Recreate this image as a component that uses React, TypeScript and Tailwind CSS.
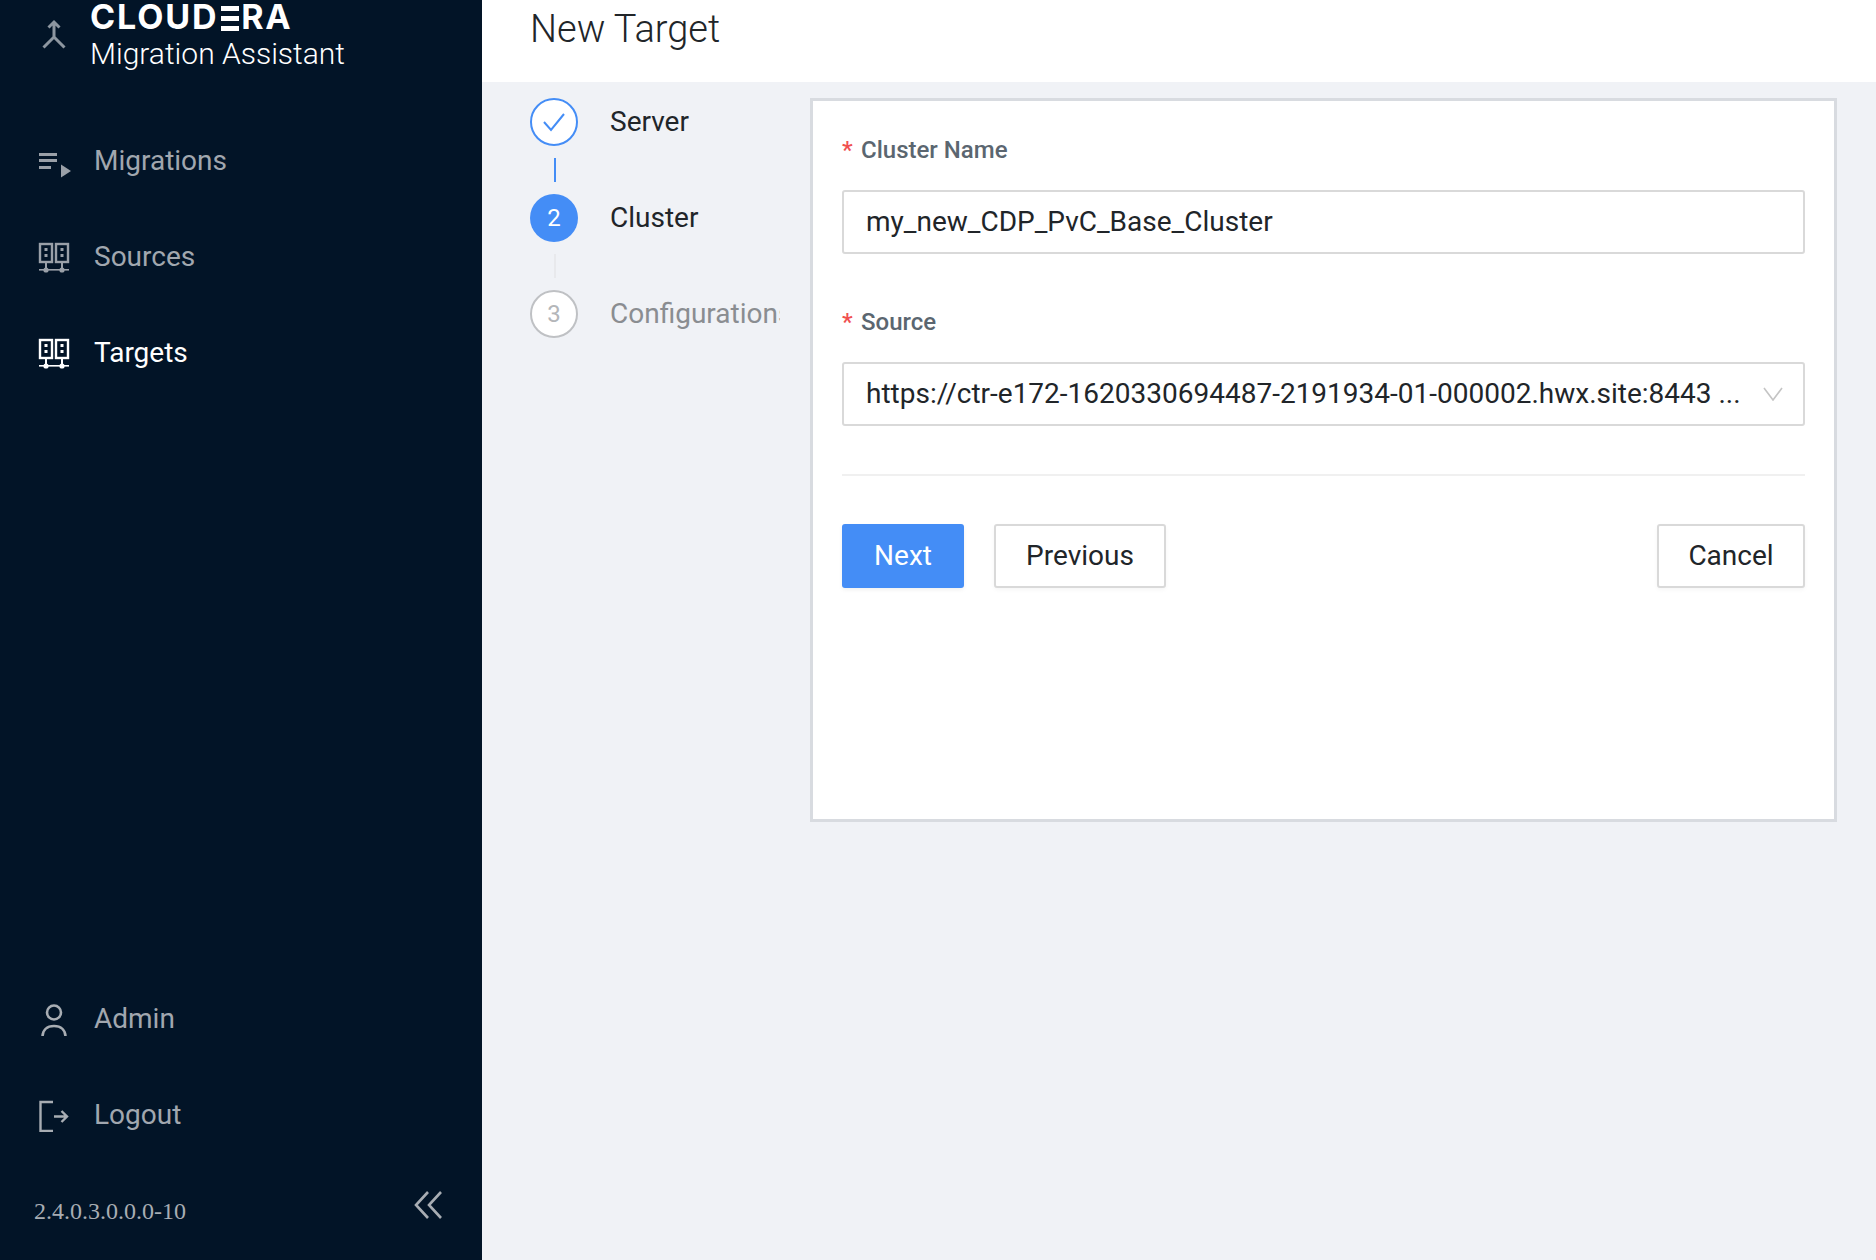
const font = { fontFamily: 'Roboto, sans-serif' }

const MigrationsIcon = () => (
    <svg width="34" height="34" viewBox="0 0 34 34" fill="#9aa0a8">
        <rect x="1" y="9" width="18" height="3" />
        <rect x="1" y="15" width="18" height="3" />
        <rect x="1" y="22" width="12" height="3" />
        <path d="M23 20.5L33 27L23 33.5Z" />
    </svg>
)

const ServersIcon = ({ color }: { color: string }) => (
    <svg width="34" height="34" viewBox="0 0 34 34" fill={color} stroke="none">
        <rect x="2" y="4" width="12" height="18" fill="none" stroke={color} strokeWidth="2.4" />
        <rect x="18" y="4" width="12" height="18" fill="none" stroke={color} strokeWidth="2.4" />
        <rect x="6.5" y="8" width="3" height="3" />
        <rect x="6.5" y="14" width="3" height="3" />
        <rect x="22.5" y="8" width="3" height="3" />
        <rect x="22.5" y="14" width="3" height="3" />
        <rect x="7" y="22" width="2" height="8" />
        <rect x="23" y="22" width="2" height="8" />
        <rect x="1" y="29" width="30" height="1.6" />
        <circle cx="8" cy="30" r="2.6" />
        <circle cx="24" cy="30" r="2.6" />
    </svg>
)

const UserIcon = () => (
    <svg width="34" height="34" viewBox="0 0 34 34" fill="none" stroke="#a8adb3" strokeWidth="2.6">
        <circle cx="16" cy="10.5" r="7" />
        <path d="M4.5 35C4.5 28 9 24 16 24C23 24 27.5 28 27.5 35" />
    </svg>
)

const LogoutIcon = () => (
    <svg width="34" height="34" viewBox="0 0 34 34" fill="none" stroke="#a8adb3" strokeWidth="2.4">
        <path d="M15 4H2.5V33H15" />
        <path d="M16 18.5H29M23.5 13L29 18.5L23.5 24" />
    </svg>
)

const NavItem = ({ icon, label, active }: { icon: React.ReactNode; label: string; active?: boolean }) => (
    <div className="flex h-[96px] items-center gap-[22px] pl-[38px]">
        {icon}
        <span className={`text-[28px] ${active ? 'text-white' : 'text-[#a1a7af]'}`} style={font}>
            {label}
        </span>
    </div>
)

const Sidebar = () => (
    <aside className="flex h-full w-[482px] shrink-0 flex-col bg-[#021427]">
        <div className="flex h-[113px] shrink-0 pl-[42px]">
            <svg width="24" height="30" viewBox="0 0 24 30" fill="none" stroke="#8d96a0" strokeWidth="3" className="mt-[19px]">
                <path d="M12 4V18M6.5 8.5L12 3L17.5 8.5M1.5 28.5L12 18L22.5 28.5" />
            </svg>
            <div className="ml-[24px] text-white" style={font}>
                <div className="mt-[-3px] flex text-[34px] leading-[40px] font-bold tracking-[1.9px]" style={{ fontFamily: 'Inter, sans-serif' }}>
                    CLOUD
                    <span className="relative text-transparent">
                        E
                        <span className="absolute inset-x-[2px] top-[9px] bottom-[6px] flex flex-col justify-between">
                            <span className="h-[5px] bg-white" />
                            <span className="h-[5px] bg-white" />
                            <span className="h-[5px] bg-white" />
                        </span>
                    </span>
                    RA
                </div>
                <div className="text-[30px] leading-[34px] font-light">Migration Assistant</div>
            </div>
        </div>
        <NavItem icon={<MigrationsIcon />} label="Migrations" />
        <NavItem icon={<ServersIcon color="#9aa0a8" />} label="Sources" />
        <NavItem icon={<ServersIcon color="#ffffff" />} label="Targets" active />
        <div className="flex-1" />
        <NavItem icon={<UserIcon />} label="Admin" />
        <NavItem icon={<LogoutIcon />} label="Logout" />
        <div className="flex h-[97px] shrink-0 items-start justify-between pr-[40px] pl-[34px]">
            <span className="mt-[32px] text-[24px] leading-[32px] text-[#a8adb3]" style={{ fontFamily: '"Liberation Serif", serif' }}>
                2.4.0.3.0.0.0-10
            </span>
            <svg width="28" height="28" viewBox="0 0 28 28" fill="none" stroke="#a8adb3" strokeWidth="2.6" className="mt-[28px]">
                <path d="M14 1L2 14L14 27M27 1L15 14L27 27" />
            </svg>
        </div>
    </aside>
)

const Steps = () => (
    <div className="flex w-[250px] shrink-0 flex-col pt-[16px]" style={font}>
        <div className="flex h-[48px] items-center gap-[32px]">
            <div className="flex h-[48px] w-[48px] shrink-0 items-center justify-center rounded-full border-2 border-[#448df6] bg-white">
                <svg width="24" height="20" viewBox="0 0 24 20" fill="none" stroke="#448df6" strokeWidth="2">
                    <path d="M2 10L9 18L22 2" />
                </svg>
            </div>
            <span className="text-[28px] text-[#212529]">Server</span>
        </div>
        <div className="my-[12px] ml-[24px] h-[24px] w-[2px] bg-[#448df6]" />
        <div className="flex h-[48px] items-center gap-[32px]">
            <div className="flex h-[48px] w-[48px] shrink-0 items-center justify-center rounded-full bg-[#448df6] text-[24px] text-white">2</div>
            <span className="text-[28px] text-[#212529]">Cluster</span>
        </div>
        <div className="my-[12px] ml-[24px] h-[24px] w-[2px] bg-[#e8e9ec]" />
        <div className="flex h-[48px] items-center gap-[32px]">
            <div className="flex h-[48px] w-[48px] shrink-0 items-center justify-center rounded-full border-2 border-[#bfc1c4] bg-white text-[24px] text-[#b4b6b9]">3</div>
            <span className="w-[170px] overflow-hidden text-[28px] whitespace-nowrap text-[#8a8d91]">Configurations</span>
        </div>
    </div>
)

const FieldLabel = ({ label }: { label: string }) => (
    <div className="flex h-[32px] items-center text-[24px] font-medium text-[#5b6670]">
        <span className="w-[19px] text-[#f0504f]">*</span>
        {label}
    </div>
)

const ActionButton = ({ label, width }: { label: string; width: string }) => (
    <button className={`h-[64px] ${width} rounded-[3px] border-2 border-[#d9d9d9] bg-white text-[28px] text-[#212529] shadow-[0_2px_4px_rgba(0,0,0,0.04)]`}>
        {label}
    </button>
)

const Form = () => (
    <div className="h-[724px] w-[1027px] border-[3px] border-[#d8dbe0] bg-white px-[29px] pt-[33px]" style={font}>
        <FieldLabel label="Cluster Name" />
        <div className="mt-[24px] flex h-[64px] items-center rounded-[3px] border-2 border-[#d9d9d9] px-[22px] text-[28px] text-[#212529]">
            my_new_CDP_PvC_Base_Cluster
        </div>
        <div className="mt-[52px]">
            <FieldLabel label="Source" />
        </div>
        <div className="mt-[24px] flex h-[64px] items-center justify-between rounded-[3px] border-2 border-[#d9d9d9] pr-[20px] pl-[22px] text-[28px] text-[#212529]">
            <span className="whitespace-nowrap">https://ctr-e172-1620330694487-2191934-01-000002.hwx.site:8443 ...</span>
            <svg width="20" height="14" viewBox="0 0 20 14" fill="none" stroke="#c4c4c4" strokeWidth="1.6">
                <path d="M1 1L10 13L19 1" />
            </svg>
        </div>
        <div className="mt-[48px] h-[2px] bg-[#f0f0f0]" />
        <div className="mt-[48px] flex">
            <button className="h-[64px] w-[122px] rounded-[3px] bg-[#448df6] text-[28px] text-white shadow-[0_2px_4px_rgba(0,0,0,0.06)]">Next</button>
            <div className="ml-[30px]">
                <ActionButton label="Previous" width="w-[172px]" />
            </div>
            <div className="ml-auto">
                <ActionButton label="Cancel" width="w-[148px]" />
            </div>
        </div>
    </div>
)

const App = () => {
    return (
        <div className="flex h-screen w-full overflow-hidden bg-[#f0f2f6]">
            <Sidebar />
            <main className="flex min-w-0 flex-1 flex-col">
                <header className="flex h-[82px] shrink-0 items-start bg-white pl-[48px]">
                    <h1 className="mt-[5px] text-[38px] leading-[48px] font-light text-[#212529]" style={font}>
                        New Target
                    </h1>
                </header>
                <div className="flex pl-[48px]">
                    <Steps />
                    <div className="mt-[16px] ml-[30px]">
                        <Form />
                    </div>
                </div>
            </main>
        </div>
    )
}

export default App
